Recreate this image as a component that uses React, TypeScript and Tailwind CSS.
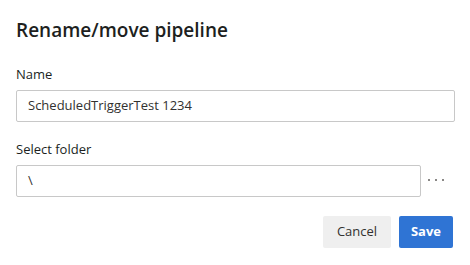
export default function App() {
  const font = { fontFamily: '"Open Sans", "Noto Sans", sans-serif' };
  return (
    <div className="w-[470px] h-[265px] bg-white text-[#201f1e] flex flex-col px-4" style={font}>
      <h1 className="mt-[18px] text-[19px] leading-[24px] font-semibold">Rename/move pipeline</h1>

      <label className="mt-[23px] text-[13px] leading-[18px]">Name</label>
      <div className="mt-[7px] w-[439px] h-[32px] border border-[#c8c8c8] rounded-[2px] flex items-center px-[11px] text-[13px] text-[#323130]">
        ScheduledTriggerTest 1234
      </div>

      <label className="mt-[18px] text-[13px] leading-[18px]">Select folder</label>
      <div className="mt-[7px] flex items-center gap-[7px]">
        <div className="w-[405px] h-[32px] border border-[#c8c8c8] rounded-[2px] flex items-center px-[11px] text-[13px] text-[#323130]">
          \
        </div>
        <button className="h-[24px] flex items-center gap-[5px] pb-[2px]">
          <span className="w-[2px] h-[2px] bg-[#8a8886]" />
          <span className="w-[2px] h-[2px] bg-[#8a8886]" />
          <span className="w-[2px] h-[2px] bg-[#8a8886]" />
        </button>
      </div>

      <div className="mt-[19px] flex justify-end gap-[8px] pr-[1px]">
        <button className="w-[68px] h-[32px] rounded-[2px] bg-[#efefef] text-[13px] text-[#323130] font-medium">
          Cancel
        </button>
        <button className="w-[54px] h-[32px] rounded-[2px] bg-[#2f74d4] text-[13px] text-white font-bold">
          Save
        </button>
      </div>
    </div>
  );
}
